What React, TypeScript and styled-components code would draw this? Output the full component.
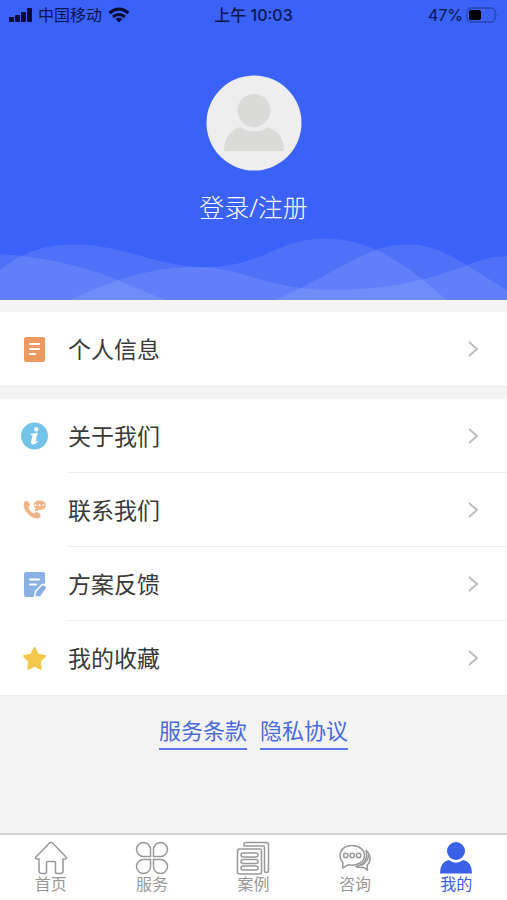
import React from "react";
import styled, { createGlobalStyle } from "styled-components";

const GlobalStyle = createGlobalStyle`
  * { box-sizing: border-box; }
  body {
    margin: 0;
    background: #f4f4f4;
    font-family: "Liberation Sans", "Noto Sans CJK SC", sans-serif;
  }
`;

const Page = styled.div`
  display: flex;
  flex-direction: column;
  min-height: 100vh;
`;

const Header = styled.header`
  display: flex;
  flex-direction: column;
  align-items: center;
  background: #3a61f8;
`;

const StatusBar = styled.div`
  display: grid;
  grid-template-columns: 1fr auto 1fr;
  align-items: center;
  align-self: stretch;
  height: 30px;
  padding: 0 8px;
  color: #0c1550;
  font-family: Inter, "Noto Sans CJK SC", sans-serif;
  font-size: 16px;
  line-height: 30px;
`;

const StatusGroup = styled.div<{ $end?: boolean }>`
  display: flex;
  align-items: center;
  justify-content: ${(p) => (p.$end ? "flex-end" : "flex-start")};
  gap: ${(p) => (p.$end ? 3 : 6)}px;
`;

const Clock = styled.time`
  font-weight: 500;
`;

const Avatar = styled.svg`
  display: block;
  width: 96px;
  height: 96px;
  margin-top: 45px;
`;

const LoginButton = styled.button`
  margin: 20px 0 15px;
  padding: 0;
  border: 0;
  background: none;
  color: #fff;
  font-family: "Noto Sans", "Noto Sans CJK SC", sans-serif;
  font-size: 25px;
  font-weight: 300;
  line-height: 32px;
  cursor: pointer;
`;

const Waves = styled.svg`
  display: block;
  width: 100%;
  height: 62px;
  fill: #fff;
  fill-opacity: 0.1;
`;

const Menu = styled.nav`
  display: flex;
  flex-direction: column;
  margin-top: 12px;
  background: #fff;
  border-bottom: 1px solid #ececec;
`;

const MenuRow = styled.a`
  display: flex;
  align-items: center;
  height: 74px;
  padding-left: 20px;
  color: #3a3a3a;
  text-decoration: none;
`;

const MenuIcon = styled.svg`
  flex: none;
  width: 28px;
  height: 28px;
  margin-right: 20px;
`;

const MenuBody = styled.span`
  display: flex;
  flex: 1;
  align-items: center;
  justify-content: space-between;
  height: 74px;
  padding: 2px 26px 0 0;
  font-size: 23px;
  line-height: 32px;

  ${MenuRow}:not(:last-child) & {
    border-bottom: 1px solid #ececec;
  }
`;

const Chevron = styled.svg`
  width: 16px;
  height: 18px;
  margin-bottom: 2px;
  fill: none;
  stroke: #bdbdbd;
  stroke-width: 2;
`;

const Legal = styled.div`
  display: flex;
  justify-content: center;
  gap: 13px;
  margin-top: 20px;
`;

const LegalLink = styled.a`
  border-bottom: 2px solid #5c7be8;
  color: #4a6bdc;
  font-size: 22px;
  line-height: 32px;
  text-decoration: none;
`;

const TabBar = styled.nav`
  display: grid;
  grid-template-columns: repeat(5, 1fr);
  margin-top: auto;
  height: 67px;
  border-top: 2px solid #d2d2d2;
  background: #fff;
`;

const Tab = styled.a<{ $active?: boolean }>`
  display: flex;
  flex-direction: column;
  align-items: center;
  padding-top: 6px;
  color: ${(p) => (p.$active ? "#3a61e8" : "#999")};
  font-size: 16px;
  line-height: 20px;
  text-decoration: none;
`;

const TabIcon = styled.svg`
  width: 34px;
  height: 34px;
  fill: none;
  stroke: currentColor;
  stroke-linecap: round;
  stroke-linejoin: round;
`;

const ProfileIcon = (
  <>
    <rect x="4" y="2" width="21" height="25" rx="2" fill="#ec9a62" />
    <path d="M10 9h9M10 14h9M10 19h5" stroke="#fff" strokeWidth="2" strokeLinecap="round" />
  </>
);

const InfoIcon = (
  <>
    <circle cx="14.5" cy="14" r="13.5" fill="#74c4ea" />
    <circle cx="16.2" cy="7.2" r="2.2" fill="#fff" />
    <path d="M10.500 12Q14 11.300 17.600 10.800L15.500 19.500Q15.800 20.200 17.800 18.800L18.200 19.500Q14.800 23 12 22.300 10.300 21.700 11 19.500L12.600 13.300 10.300 13Z" fill="#fff" />
  </>
);

const ContactIcon = (
  <>
    <path d="M4.5 6Q7 3 9.500 7.500q1.200 2.200-.8 3.500c-1 1 3.500 6.500 5.500 6.500 1.800-2.500 3.500-1.500 5.500.2 2.500 2-.2 4.300-2.300 4.800C11 23.500.5 12 4.500 6Z" fill="#efb588" />
    <path d="M19.500 4.500c9-.2 8 9.500.2 9.500l-5 1.500 1-3c-4-3-1.500-8 3.800-8Z" fill="#efb588" />
    <path d="M15.500 9.300h.1M19.500 9.300h.1M23.300 9.300h.1" stroke="#fff" strokeWidth="2" strokeLinecap="round" />
  </>
);

const FeedbackIcon = (
  <>
    <path d="M6 2h17q2 0 2 2v11L15 27H6q-2 0-2-2V4q0-2 2-2Z" fill="#8bb1e4" />
    <path d="M10 9.500h9M10 14.500h6" stroke="#fff" strokeWidth="2" strokeLinecap="round" />
    <path d="m14.500 27 1-5.500 6-6.500q2-1.500 4 .5t.5 4L20.500 27Z" fill="#8bb1e4" stroke="#fff" strokeWidth="1.500" />
  </>
);

const FavoriteIcon = (
  <path d="m14.500 4 3.300 6.800 7.200 1.200-5.200 5.300 1 7.500-6.300-3.300L8.200 24.800l1-7.500L4 12l7.200-1.200Z" fill="#f4c84a" stroke="#f4c84a" strokeWidth="2" strokeLinejoin="round" />
);

const HomeIcon = (
  <path d="M17 1.500Q18 1.500 19 2.500L32 16q1.500 2-1 2h-2v12q0 2.500-2.500 2.500h-3.500q-1.500 0-1.500-1.500V22q0-1.500-1.500-1.500h-6q-1.500 0-1.500 1.500V31q0 1.500-1.500 1.500H7.500Q5 32.500 5 30V18H3q-2.500 0-1-2L15 2.500q1-1 2-1Z" />
);

const ServiceIcon = (
  <path d="M15.500 15.500V8.500a7 7 0 1 0-7 7ZM18.500 15.500h7a7 7 0 1 0-7-7ZM15.500 18.500h-7a7 7 0 1 0 7 7ZM18.500 18.500v7a7 7 0 1 0 7-7Z" />
);

const CasesIcon = (
  <>
    <rect x="1.500" y="8" width="24" height="25" rx="2" />
    <rect x="5" y="12" width="17" height="4" rx="2" />
    <rect x="5" y="18.500" width="17" height="4" rx="2" />
    <rect x="5" y="25" width="17" height="4" rx="2" />
    <path d="M8 5V3q0-1.500 1.500-1.500h21Q32.500 1.500 32.500 3.500v26q0 2-2 2T28.500 30V6.500Q28.500 5 27 5Z" />
  </>
);

const ChatIcon = (
  <>
    <path d="M14 4.500C6.500 4.500 2 9 2 14.500c0 3 1.300 5.500 3 7.300L4.500 27l5.500-3.200c8.500 1.700 16.500-2.800 16.500-9.300 0-5.500-5-10-12.500-10Z" />
    <path d="M28 9.500c5.500 4.500 5 11 1 14.700l.5 5-4.500-3q-4 .8-7-.7C26 24 30.500 17 28 9.500Z" />
    <path d="M30.500 14.500q-.5 6-6.500 9.500" />
    <circle cx="7.800" cy="14.500" r="2.200" />
    <circle cx="14.200" cy="14.500" r="2.200" />
    <circle cx="20.600" cy="14.500" r="2.200" />
  </>
);

const MineIcon = (
  <g fill="currentColor" stroke="none">
    <circle cx="17" cy="10" r="9" />
    <path d="M1 32.500q0-12 9-13.500 7 5.500 14 0 9 1.500 9 13.500Z" />
  </g>
);

const tabs = [
  { label: "首页", icon: HomeIcon },
  { label: "服务", icon: ServiceIcon },
  { label: "案例", icon: CasesIcon },
  { label: "咨询", icon: ChatIcon },
  { label: "我的", icon: MineIcon, active: true },
];

const menus = [
  [{ label: "个人信息", icon: ProfileIcon }],
  [
    { label: "关于我们", icon: InfoIcon },
    { label: "联系我们", icon: ContactIcon },
    { label: "方案反馈", icon: FeedbackIcon },
    { label: "我的收藏", icon: FavoriteIcon },
  ],
];

export default function App() {
  return (
    <Page>
      <GlobalStyle />
      <Header>
        <StatusBar>
          <StatusGroup>
            <svg width="24" height="14" viewBox="0 0 24 14" fill="#080c30" aria-hidden="true">
              <rect x="1" y="9" width="5" height="5" rx="1" />
              <rect x="7" y="7" width="5" height="7" rx="1" />
              <rect x="13" y="4" width="5" height="10" rx="1" />
              <rect x="19" y="0" width="5" height="14" rx="1" />
            </svg>
            <span>中国移动</span>
            <svg width="22" height="16" viewBox="0 0 22 16" fill="none" stroke="#080c30" strokeWidth="3" aria-hidden="true">
              <path d="M1.500 6q9.500-8 19 0M5 10q6-5 12 0" />
              <path d="m7.500 12 3.500 3.500 3.500-3.500q-3.500-2.500-7 0Z" fill="#080c30" stroke="none" />
            </svg>
          </StatusGroup>
          <Clock>上午 10:03</Clock>
          <StatusGroup $end>
            <span>47%</span>
            <svg width="33" height="16" viewBox="0 0 33 16" aria-hidden="true">
              <rect x="1" y="1" width="28" height="14" rx="4" fill="none" stroke="#2844ad" strokeWidth="1.300" />
              <rect x="3" y="3" width="12" height="10" rx="2" fill="#000" />
              <path d="M31 6q2 2 0 4Z" fill="#2844ad" />
            </svg>
          </StatusGroup>
        </StatusBar>
        <Avatar viewBox="0 0 96 96" aria-hidden="true">
          <circle cx="48" cy="48" r="47.500" fill="#eeeeee" />
          <circle cx="48" cy="35.500" r="16.500" fill="#dadad9" />
          <path d="M18 76q0-18 16-24 14 9 28 0 16 6 16 24Z" fill="#dadad9" />
        </Avatar>
        <LoginButton type="button">登录/注册</LoginButton>
        <Waves viewBox="0 0 507 62" preserveAspectRatio="none" aria-hidden="true">
          <path d="M0 16C55 20 95 32 117 42L166 62H0Z" />
          <path d="M0 32C22 15 42 6.500 75 6.500C125 6.500 155 29 205 29C265 29 275 .5 325 .5C370 .5 405 25 447 62H0Z" />
          <path d="M70 62C110 43 150 29 195 29C245 29 265 52 334 52C410 52 455 31 476 24Q490 18 507 18V62Z" />
          <path d="M275 62C340 34 365 6.500 407 6.500C445 6.500 465 28 507 52V62Z" />
        </Waves>
      </Header>
      <main>
        {menus.map((rows, i) => (
          <Menu key={i}>
            {rows.map((row) => (
              <MenuRow href="#" key={row.label}>
                <MenuIcon viewBox="0 0 28 28" overflow="visible" fill="none" aria-hidden="true">{row.icon}</MenuIcon>
                <MenuBody>
                  {row.label}
                  <Chevron viewBox="0 0 16 18" aria-hidden="true"><path d="m4 2 8 7-8 7" /></Chevron>
                </MenuBody>
              </MenuRow>
            ))}
          </Menu>
        ))}
        <Legal>
          <LegalLink href="#">服务条款</LegalLink>
          <LegalLink href="#">隐私协议</LegalLink>
        </Legal>
      </main>
      <TabBar>
        {tabs.map((tab) => (
          <Tab href="#" key={tab.label} $active={tab.active} aria-current={tab.active ? "page" : undefined}>
            <TabIcon viewBox="0 0 34 34" strokeWidth="1.5" aria-hidden="true">{tab.icon}</TabIcon>
            {tab.label}
          </Tab>
        ))}
      </TabBar>
    </Page>
  );
}
